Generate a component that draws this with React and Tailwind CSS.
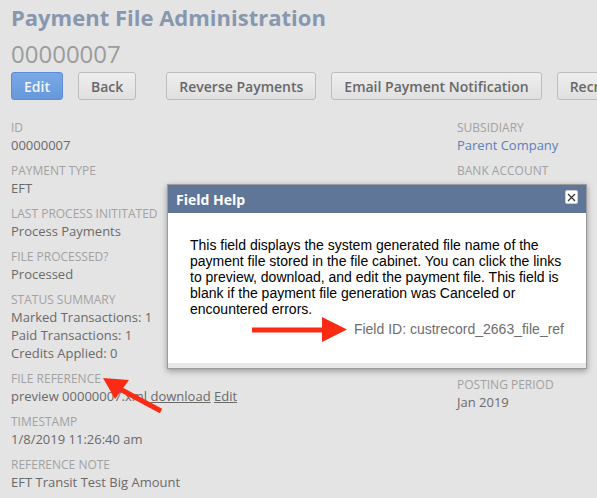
import React from 'react';

const sans = { fontFamily: '"Open Sans", "Liberation Sans", sans-serif' };

function Field({ label, children, className = '' }) {
  return (
    <div className={`mb-[8px] ${className}`}>
      <div className="text-[12px] leading-[17px] uppercase text-[#a2a2a2]">{label}</div>
      <div className="text-[13px] leading-[18px] text-[#6a6a6a]">{children}</div>
    </div>
  );
}

function Btn({ children, primary }) {
  return primary ? (
    <button className="h-[28px] px-[12px] rounded-[3px] border border-[#5b8cd4] bg-gradient-to-b from-[#79a8e6] to-[#6698dc] text-[14px] font-semibold text-[#f2f6fc] whitespace-nowrap">
      {children}
    </button>
  ) : (
    <button className="h-[28px] px-[12px] rounded-[3px] border border-[#bdbdbd] bg-gradient-to-b from-[#eeeeee] to-[#e0e0e0] text-[14px] font-semibold text-[#686868] whitespace-nowrap">
      {children}
    </button>
  );
}

export default function App() {
  return (
    <div className="relative w-[597px] h-[498px] overflow-hidden bg-[#e4e4e4]" style={sans}>
      <div className="pl-[11px]">
        <h1 className="pt-[3px] text-[22px] leading-[28px] font-bold text-[#8897ae]">Payment File Administration</h1>
        <div className="mt-[8px] text-[24px] leading-[30px] text-[#9c9c9c]">00000007</div>

        <div className="mt-[3px] flex items-center gap-[15px]">
          <Btn primary>Edit</Btn>
          <Btn>Back</Btn>
          <div className="w-px h-[26px] bg-[#c4c4c4]" />
          <Btn>Reverse Payments</Btn>
          <Btn>Email Payment Notification</Btn>
          <Btn>Recreate Payment File</Btn>
        </div>

        <div className="mt-[19px] flex">
          <div className="w-[446px] shrink-0">
            <Field label="ID">00000007</Field>
            <Field label="Payment Type">EFT</Field>
            <Field label="Last Process Inititated">Process Payments</Field>
            <Field label="File Processed?">Processed</Field>
            <Field label="Status Summary">
              <div>Marked Transactions: 1</div>
              <div>Paid Transactions: 1</div>
              <div>Credits Applied: 0</div>
            </Field>
            <Field label="File Reference">
              preview 00000007.xml <span className="underline">download</span>{' '}
              <span className="underline">Edit</span>
            </Field>
            <Field label="Timestamp">1/8/2019 11:26:40 am</Field>
            <Field label="Reference Note">EFT Transit Test Big Amount</Field>
          </div>
          <div className="flex-1">
            <Field label="Subsidiary">
              <span className="text-[#5b80b9]">Parent Company</span>
            </Field>
            <Field label="Bank Account">EFT Transit Account</Field>
            <Field label="Posting Period" className="mt-[179px]">Jan 2019</Field>
          </div>
        </div>
      </div>

      {/* Field help popup */}
      <div className="absolute left-[167px] top-[184px] w-[420px] border border-[#9a9a9a] bg-white shadow-[0_2px_6px_rgba(0,0,0,0.35)]">
        <div className="relative h-[28px] bg-[#5f7699] pl-[8px] flex items-center">
          <span className="text-[14px] font-bold text-white">Field Help</span>
          <div className="absolute right-[8px] top-[5px] w-[13px] h-[14px] rounded-[2px] bg-white border border-[#cfcfcf] flex items-center justify-center">
            <svg width="9" height="9" viewBox="0 0 9 9">
              <path d="M1 1 L8 8 M8 1 L1 8" stroke="#333" strokeWidth="1.2" />
            </svg>
          </div>
        </div>
        <div className="pl-[22px] pr-[22px] pt-[24px] pb-[26px] text-[14px] leading-[16px] text-black" style={{ fontFamily: '"Liberation Sans", Arial, sans-serif' }}>
          <p>
            This field displays the system generated file name of the payment file stored in the file cabinet. You can
            click the links to preview, download, and edit the payment file. This field is blank if the payment file
            generation was Canceled or encountered errors.
          </p>
          <p className="mt-[4px] text-right text-[#6e6e6e]">Field ID: custrecord_2663_file_ref</p>
        </div>
        <div className="h-[5px] bg-[#e8e8e8]" />
      </div>

      {/* annotation arrows */}
      <svg className="absolute inset-0 pointer-events-none" width="597" height="498">
        <line x1="252" y1="330" x2="325" y2="330" stroke="#fa2a14" strokeWidth="5" />
        <polygon points="322,317 347,329.5 322,342" fill="#fa2a14" />
        <line x1="161" y1="411" x2="118" y2="388" stroke="#fa2a14" strokeWidth="5" />
        <polygon points="103,378 129,380 115,399" fill="#fa2a14" />
      </svg>
    </div>
  );
}
